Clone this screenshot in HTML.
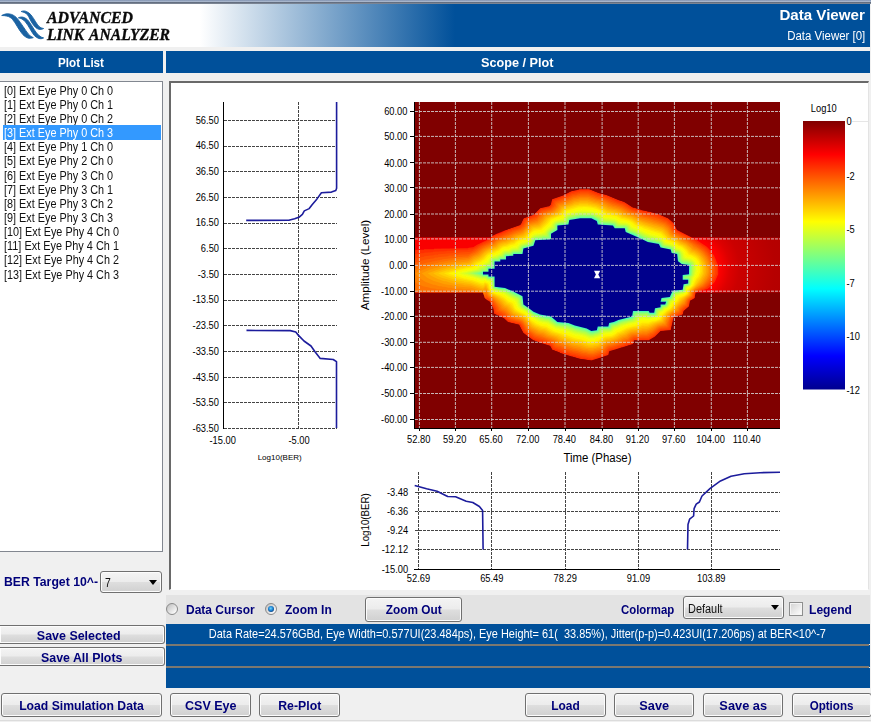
<!DOCTYPE html>
<html><head><meta charset="utf-8"><title>Data Viewer</title>
<style>
html,body{margin:0;padding:0}
body{width:871px;height:722px;position:relative;overflow:hidden;background:#f0f0f0;font-family:"Liberation Sans",sans-serif;font-size:12px;color:#000}
.abs{position:absolute}
.t{position:absolute;white-space:pre;line-height:1;display:block}
#chrome{left:0;top:0;width:871px;height:4px;background:linear-gradient(#8898b4 0,#8fa0bc 18%,#b8c8e0 32%,#8c98aa 46%,#626e80 58%,#687282 80%,#9aa2ae 100%)}
#hdr{left:0;top:3.6px;width:870px;height:43.4px;background:linear-gradient(90deg,#fff 0,#fff 200px,#00509a 455px,#00509a 100%)}
.bar{top:51px;height:22px;background:#00509a}
#listbox{left:0;top:81px;width:163px;height:471px;background:#fff;border:1px solid #828790;border-left:none;box-sizing:border-box}
.sel{position:absolute;left:3px;width:158px;height:14.15px;background:#3399ff}
#plotpanel{left:169px;top:81px;width:700px;height:509px;background:#fff;box-sizing:border-box;border-left:2px solid #696969;border-top:2px solid #696969;border-right:1px solid #e3e3e3;border-bottom:1px solid #fff}
#ctl{left:166px;top:595px;width:704px;height:29px;background:#e3e3e3}
.btn{position:absolute;border:1px solid #707070;border-radius:3px;background:linear-gradient(#f4f4f4 0,#ececec 48%,#dedede 52%,#d0d0d0 100%);box-shadow:inset 0 0 0 1px #fcfcfc}
.combo{position:absolute;border:1px solid #707070;border-radius:3px;background:linear-gradient(#f4f4f4 0,#ececec 48%,#dedede 52%,#d0d0d0 100%);box-shadow:inset 0 0 0 1px #fcfcfc;box-sizing:border-box}
.combo i{position:absolute;right:3.6px;top:50%;margin-top:-2.2px;width:0;height:0;border-left:4.3px solid transparent;border-right:4.3px solid transparent;border-top:5.6px solid #000}
.status{position:absolute;left:166px;width:703.8px;background:#00509a}
.radio{position:absolute;width:10.4px;height:10.4px;border-radius:50%;border:1px solid #8a8a8a;background:linear-gradient(135deg,#c4c4c4 10%,#fafafa 85%)}
.radio.on::after{content:"";position:absolute;left:2.2px;top:2.2px;width:6px;height:6px;border-radius:50%;background:radial-gradient(circle at 45% 40%,#6fd6ff 0,#1a7fd0 45%,#0a2f66 85%)}
.check{position:absolute;width:11.6px;height:11.8px;border:1px solid #8e8f8f;background:linear-gradient(135deg,#d2d2d2,#fff);box-shadow:inset 0 0 0 1px #f4f4f4}
</style></head>
<body>
<div id="chrome" class="abs"></div>
<div id="hdr" class="abs"></div>
<svg class="abs" style="left:0;top:0" width="48" height="48" viewBox="0 0 48 48">
 <path d="M1.7 15.5 C4 14 8 13.2 11.5 14.4 C14 15.4 15.6 16.6 17.2 18.4 C19.5 21 21 23.6 23 26.4 C25 29.2 26.6 32 28.7 34.4 C30.2 36 31.6 36.9 33.3 37.6 C31.4 38.4 29.4 38.5 27.6 37.9 C25.2 37 23.4 35.4 21.8 33.3 C20 31 18.7 28.8 17.2 26.4 C15.8 24 14.4 21.7 12.6 19.5 C11 17.7 9.2 16.6 6.9 16.1 C5.2 15.7 3.4 15.5 1.7 15.5Z" fill="#1a62a2" stroke="#1a62a2" stroke-width="0.9" stroke-linejoin="round"/>
 <path d="M18.4 17.8 C20 17 21.5 16.9 23 17.2 C25.4 17.8 27.2 19.2 28.7 21.2 C30.8 24 32.5 27 34.4 29.9 C35.8 32 37.2 34 39 35.6 C40.4 36.8 41.9 37.5 43.6 37.9 C42 38.8 40.5 38.9 39 38.5 C37.1 38 35.7 37 34.4 35.6 C32.6 33.5 31.3 31 29.9 28.7 C28.5 26.3 27.1 23.9 25.3 21.8 C24.3 20.6 23.2 19.6 21.8 18.9 C20.8 18.4 19.6 18 18.4 17.8Z" fill="#1a62a2" stroke="#1a62a2" stroke-width="0.9" stroke-linejoin="round"/>
 <path d="M21.2 11.5 C23 10.8 24.8 10.8 26.4 11.5 C28.3 12.3 29.7 13.4 31 14.9 C32.8 17 34.2 19.5 35.6 21.8 C36.6 23.4 37.7 25 39 26.4 C40.3 27.6 41.8 28.2 43.6 28.5 C42.1 29.4 40.5 29.6 39 29.3 C37.1 28.8 35.7 27.7 34.4 26.2 C32.9 24.5 31.9 22.7 30.8 20.9 C29.8 19.2 28.8 16.4 27.6 14.9 C26.7 13.8 25.5 13 24.1 12.4 C23.2 12 22.2 11.7 21.2 11.5Z" fill="#1a62a2" stroke="#1a62a2" stroke-width="0.9" stroke-linejoin="round"/>
</svg>
<span class="t" style="left:47.30px;top:9.50px;font-family:'Liberation Serif',serif;font-size:16px;font-weight:bold;font-style:italic;color:#0a0a0a;transform:scaleX(0.9903);transform-origin:0 0;-webkit-text-stroke:0.35px #0a0a0a">ADVANCED</span>
<span class="t" style="left:47.30px;top:26.80px;font-family:'Liberation Serif',serif;font-size:16px;font-weight:bold;font-style:italic;color:#0a0a0a;transform:scaleX(0.9753);transform-origin:0 0;-webkit-text-stroke:0.35px #0a0a0a;word-spacing:1.5px">LINK ANALYZER</span>
<span class="t" style="left:780.02px;top:6.90px;font-family:'Liberation Sans',sans-serif;font-size:15px;font-weight:bold;font-style:normal;color:#fff;transform:scaleX(1.0073);transform-origin:100% 0;">Data Viewer</span>
<span class="t" style="left:780.37px;top:30.02px;font-family:'Liberation Sans',sans-serif;font-size:12.5px;font-weight:normal;font-style:normal;color:#fff;transform:scaleX(0.9151);transform-origin:100% 0;">Data Viewer [0]</span>
<div class="abs bar" style="left:0;width:163px"></div>
<div class="abs bar" style="left:166px;width:704px"></div>
<span class="t" style="left:57.50px;top:56.36px;font-family:'Liberation Sans',sans-serif;font-size:13.4px;font-weight:bold;font-style:normal;color:#fff;transform:scaleX(0.8707);transform-origin:0 0;">Plot List</span>
<span class="t" style="left:481.00px;top:56.36px;font-family:'Liberation Sans',sans-serif;font-size:13.4px;font-weight:bold;font-style:normal;color:#fff;transform:scaleX(0.9460);transform-origin:0 0;">Scope / Plot</span>
<div id="listbox" class="abs"></div>
<span class="t" style="left:4.30px;top:83.66px;font-family:'Liberation Sans',sans-serif;font-size:13.4px;font-weight:normal;font-style:normal;color:#111;transform:scaleX(0.8098);transform-origin:0 0;">[0] Ext Eye Phy 0 Ch 0</span>
<span class="t" style="left:4.30px;top:97.81px;font-family:'Liberation Sans',sans-serif;font-size:13.4px;font-weight:normal;font-style:normal;color:#111;transform:scaleX(0.8098);transform-origin:0 0;">[1] Ext Eye Phy 0 Ch 1</span>
<span class="t" style="left:4.30px;top:111.96px;font-family:'Liberation Sans',sans-serif;font-size:13.4px;font-weight:normal;font-style:normal;color:#111;transform:scaleX(0.8098);transform-origin:0 0;">[2] Ext Eye Phy 0 Ch 2</span>
<div class="sel" style="top:125.45px"></div>
<span class="t" style="left:4.30px;top:126.11px;font-family:'Liberation Sans',sans-serif;font-size:13.4px;font-weight:normal;font-style:normal;color:#fff;transform:scaleX(0.8098);transform-origin:0 0;">[3] Ext Eye Phy 0 Ch 3</span>
<span class="t" style="left:4.30px;top:140.26px;font-family:'Liberation Sans',sans-serif;font-size:13.4px;font-weight:normal;font-style:normal;color:#111;transform:scaleX(0.8098);transform-origin:0 0;">[4] Ext Eye Phy 1 Ch 0</span>
<span class="t" style="left:4.30px;top:154.41px;font-family:'Liberation Sans',sans-serif;font-size:13.4px;font-weight:normal;font-style:normal;color:#111;transform:scaleX(0.8098);transform-origin:0 0;">[5] Ext Eye Phy 2 Ch 0</span>
<span class="t" style="left:4.30px;top:168.56px;font-family:'Liberation Sans',sans-serif;font-size:13.4px;font-weight:normal;font-style:normal;color:#111;transform:scaleX(0.8098);transform-origin:0 0;">[6] Ext Eye Phy 3 Ch 0</span>
<span class="t" style="left:4.30px;top:182.71px;font-family:'Liberation Sans',sans-serif;font-size:13.4px;font-weight:normal;font-style:normal;color:#111;transform:scaleX(0.8098);transform-origin:0 0;">[7] Ext Eye Phy 3 Ch 1</span>
<span class="t" style="left:4.30px;top:196.86px;font-family:'Liberation Sans',sans-serif;font-size:13.4px;font-weight:normal;font-style:normal;color:#111;transform:scaleX(0.8098);transform-origin:0 0;">[8] Ext Eye Phy 3 Ch 2</span>
<span class="t" style="left:4.30px;top:211.01px;font-family:'Liberation Sans',sans-serif;font-size:13.4px;font-weight:normal;font-style:normal;color:#111;transform:scaleX(0.8098);transform-origin:0 0;">[9] Ext Eye Phy 3 Ch 3</span>
<span class="t" style="left:4.30px;top:225.16px;font-family:'Liberation Sans',sans-serif;font-size:13.4px;font-weight:normal;font-style:normal;color:#111;transform:scaleX(0.8088);transform-origin:0 0;">[10] Ext Eye Phy 4 Ch 0</span>
<span class="t" style="left:4.30px;top:239.31px;font-family:'Liberation Sans',sans-serif;font-size:13.4px;font-weight:normal;font-style:normal;color:#111;transform:scaleX(0.8145);transform-origin:0 0;">[11] Ext Eye Phy 4 Ch 1</span>
<span class="t" style="left:4.30px;top:253.46px;font-family:'Liberation Sans',sans-serif;font-size:13.4px;font-weight:normal;font-style:normal;color:#111;transform:scaleX(0.8088);transform-origin:0 0;">[12] Ext Eye Phy 4 Ch 2</span>
<span class="t" style="left:4.30px;top:267.61px;font-family:'Liberation Sans',sans-serif;font-size:13.4px;font-weight:normal;font-style:normal;color:#111;transform:scaleX(0.8088);transform-origin:0 0;">[13] Ext Eye Phy 4 Ch 3</span>
<div id="plotpanel" class="abs"></div>
<div id="ctl" class="abs"></div>
<svg id="plot" width="871" height="722" viewBox="0 0 871 722" style="position:absolute;left:0;top:0">
<defs>
<clipPath id="co"><polygon points="415.0,237.6 491.2,237.6 491.2,236.5 496.7,233.8 507.8,229.2 520.6,224.6 523.4,218.2 533.5,214.5 540.0,208.0 550.0,205.3 551.8,198.9 562.9,195.2 570.2,191.5 579.4,188.8 588.6,188.8 597.8,192.5 607.0,195.2 616.5,198.9 625.7,202.6 632.1,207.1 642.2,209.9 657.0,213.6 668.0,218.2 673.5,222.8 677.1,230.1 686.3,234.7 691.8,237.6 780.0,237.6 780.0,292.6 695.5,292.6 694.6,298.0 690.0,300.8 689.0,306.3 683.6,311.0 682.7,314.6 673.5,317.4 670.7,330.2 660.6,331.1 655.0,336.6 648.7,340.3 634.0,340.3 633.0,344.0 618.4,348.6 609.2,351.3 608.3,355.0 600.0,357.8 591.3,360.5 579.4,358.7 570.2,356.0 561.0,353.2 551.8,349.5 550.0,345.8 540.8,343.0 533.5,340.3 528.0,336.6 523.4,333.0 518.8,324.7 507.8,322.0 504.0,318.3 494.0,313.7 493.0,308.2 489.4,301.7 484.8,298.0 483.0,292.6 415.0,292.6"/></clipPath>
<clipPath id="cp"><rect x="415" y="102" width="365" height="326"/></clipPath>
<filter id="b0" x="-30%" y="-30%" width="160%" height="160%"><feGaussianBlur stdDeviation="0.7"/></filter>
<radialGradient id="rglow" gradientUnits="userSpaceOnUse" cx="690" cy="268" r="120"><stop offset="0" stop-color="#ff0000"/><stop offset="0.24" stop-color="#ff0000"/><stop offset="0.329" stop-color="#dd0000"/><stop offset="0.4125" stop-color="#cb0000"/><stop offset="0.704" stop-color="#b60000"/><stop offset="0.975" stop-color="#b00000"/></radialGradient>
<linearGradient id="jet" x1="0" y1="0" x2="0" y2="1"><stop offset="0" stop-color="#800000"/><stop offset="0.125" stop-color="#ff0000"/><stop offset="0.375" stop-color="#ffff00"/><stop offset="0.625" stop-color="#00ffff"/><stop offset="0.875" stop-color="#0000ff"/><stop offset="1" stop-color="#00008f"/></linearGradient>
</defs>
<rect x="415" y="102" width="365" height="326" fill="#800000"/>
<g clip-path="url(#co)">
<rect x="415" y="230" width="200" height="70" fill="#fa0000"/>
<rect x="615" y="230" width="165" height="70" fill="url(#rglow)"/>
<g filter="url(#b0)">
<path d="M718.2 265.8L714.2 255.8L710.2 250.2L706.8 246.8L696.2 239.8L677.2 230.2L673.8 223.2L668.2 218.2L657.8 213.8L656.2 213.8L649.8 211.8L647.8 211.8L647.2 211.2L641.8 210.2L639.8 209.2L638.2 209.2L634.8 207.8L633.2 207.8L623.8 201.8L618.8 200.2L606.2 194.8L599.2 193.2L589.2 189.2L579.2 189.2L578.8 189.8L571.2 191.2L563.8 195.2L552.2 199.2L550.8 204.8L549.2 206.2L540.2 208.2L533.8 214.8L523.8 218.2L521.2 223.8L519.8 225.2L507.8 229.2L500.8 232.8L496.2 234.2L491.2 236.8L490.8 238.2L477.2 244.8L473.2 247.2L468.8 247.8L468.2 248.2L434.2 248.8L433.8 249.2L424.2 249.2L423.8 249.8L416.8 249.8L415.2 250.2L415.2 293.8L481.8 293.8L482.8 294.8L484.2 299.2L487.2 301.8L488.8 300.8L490.2 302.2L493.2 308.2L494.2 313.8L503.8 318.2L508.2 322.2L519.2 324.8L523.2 332.8L532.8 340.2L549.2 345.8L550.8 346.8L552.2 349.8L559.2 352.2L560.8 353.2L571.2 356.8L572.8 356.8L579.2 358.8L592.2 360.8L608.8 355.2L609.2 352.2L610.2 351.2L614.8 350.2L621.2 347.8L622.8 347.8L629.2 345.2L633.2 344.2L633.8 341.8L634.8 340.8L648.8 340.8L654.8 337.2L660.8 331.2L670.8 330.2L673.8 318.2L674.8 317.2L682.8 314.8L683.8 311.2L689.2 306.8L690.2 301.2L694.8 298.2L695.8 293.2L696.8 292.2L707.8 288.8L711.8 285.2L714.8 281.8L718.2 274.2Z" fill="#ff2f00"/>
<path d="M716.8 266.8L713.2 257.2L708.8 250.8L705.8 247.8L691.2 238.2L676.8 231.2L674.2 227.8L672.8 224.2L667.8 219.8L657.2 215.2L645.2 212.8L638.8 210.2L637.2 210.2L634.2 208.8L632.8 208.8L628.8 206.8L625.8 204.2L618.2 201.8L605.8 196.2L598.8 194.8L588.8 190.8L579.8 190.8L579.2 191.2L571.8 192.8L566.2 195.8L553.8 200.2L552.8 201.8L551.8 205.2L549.8 207.2L541.2 209.2L534.8 215.8L528.8 218.2L524.8 219.2L522.2 224.2L520.2 226.2L512.8 228.8L498.2 235.2L497.2 235.2L492.2 237.8L491.8 239.2L482.8 243.2L472.8 249.2L467.8 249.8L467.2 250.2L456.2 250.2L455.8 250.8L447.2 250.8L446.8 251.2L433.2 251.8L432.8 252.2L423.8 252.8L423.2 253.2L419.8 253.2L419.2 253.8L416.2 253.8L415.2 254.2L415.2 293.8L481.8 293.8L482.8 294.8L483.8 298.2L485.2 300.2L486.8 300.8L488.2 299.8L490.8 301.8L494.2 307.8L494.8 310.8L495.8 312.8L504.8 317.2L510.2 321.8L519.8 323.8L520.8 324.8L524.2 332.2L526.2 333.2L533.2 338.8L543.8 342.2L545.2 343.2L549.2 344.2L551.2 345.2L553.8 348.8L557.2 349.8L558.8 350.8L560.2 350.8L561.8 351.8L572.2 355.2L573.8 355.2L582.2 357.8L584.8 357.8L585.2 358.2L587.8 358.2L588.2 358.8L590.8 358.8L591.8 359.2L607.2 354.2L608.2 351.2L610.2 349.8L613.8 349.2L619.8 347.2L621.2 346.2L622.8 346.2L625.8 344.8L631.8 343.2L632.8 340.8L633.8 339.8L648.2 339.2L655.2 335.2L660.2 330.2L669.8 329.2L672.8 318.2L676.2 315.8L681.2 314.2L682.2 313.2L682.8 310.8L687.2 306.8L688.2 306.8L688.2 305.8L689.2 304.2L689.8 300.8L694.2 297.8L695.2 292.8L696.2 291.8L705.2 288.8L712.8 281.8L715.8 276.2L716.8 273.2Z" fill="#ff4000"/>
<path d="M715.2 267.2L713.8 262.2L711.2 256.8L707.2 251.2L704.2 248.2L700.2 245.2L696.2 243.2L694.8 241.8L692.2 240.8L690.8 239.2L676.2 232.2L673.8 229.2L671.8 225.2L666.8 220.8L664.8 220.2L662.2 218.8L660.8 218.8L656.8 216.8L651.2 215.8L649.2 214.8L647.2 214.8L642.2 212.8L640.8 212.8L631.8 209.8L622.8 204.2L617.2 202.8L607.2 198.2L601.2 196.2L597.8 195.8L588.2 192.2L580.2 192.2L579.8 192.8L577.8 192.8L577.2 193.2L571.8 194.2L567.2 196.8L554.8 201.2L552.2 206.8L550.2 208.2L548.8 208.2L541.2 210.8L535.8 216.8L529.8 219.2L525.8 220.2L523.8 224.2L520.8 227.2L517.8 228.8L512.2 230.2L511.2 231.2L508.8 231.8L501.8 235.2L496.8 236.8L494.8 237.8L492.2 240.2L479.8 246.2L477.2 248.2L470.8 251.8L438.2 254.2L437.8 254.8L434.2 254.8L433.8 255.2L424.2 256.2L423.8 256.8L415.2 258.2L415.2 293.8L481.8 293.8L482.8 294.8L482.8 295.8L484.8 299.8L487.2 297.8L492.2 302.2L496.2 309.2L496.2 311.2L504.8 315.8L507.2 318.2L510.2 320.2L519.8 322.8L522.8 326.2L525.2 331.2L534.2 337.8L543.2 340.8L544.8 341.8L550.2 343.2L552.2 344.2L553.8 346.8L555.2 347.8L572.8 353.8L574.2 353.8L582.8 356.2L585.2 356.2L588.8 357.2L593.2 357.2L605.8 353.2L606.8 351.2L609.2 348.8L614.2 347.8L618.8 345.8L621.8 345.2L624.8 343.8L630.8 342.2L631.2 340.8L634.2 338.2L648.2 337.8L653.8 334.8L660.2 329.2L668.2 328.2L669.8 325.8L669.8 324.2L671.8 318.2L674.2 315.8L680.8 313.2L682.2 309.8L685.8 306.8L687.2 306.2L689.2 300.2L691.8 298.8L693.8 296.8L694.2 293.2L696.2 291.2L704.8 287.8L707.2 285.8L711.8 280.8L714.8 274.2L714.8 272.8L715.2 272.2Z" fill="#ff5000"/>
<path d="M713.8 267.8L710.8 258.8L706.8 252.8L703.2 249.2L697.8 245.2L690.8 241.2L689.2 239.8L680.8 235.8L676.8 233.2L675.8 233.2L673.2 230.8L670.2 225.2L667.8 223.8L665.8 221.8L663.2 221.2L660.8 219.8L654.8 217.8L644.2 215.2L638.2 212.8L636.8 212.8L635.2 211.8L632.2 211.2L622.8 205.8L610.8 201.8L604.8 198.8L596.2 196.8L593.2 195.2L591.8 195.2L588.2 193.8L580.2 193.8L575.2 195.2L573.2 195.2L564.8 199.2L562.2 199.8L556.2 202.2L555.2 203.2L555.2 204.2L553.8 206.8L550.8 209.2L542.2 211.8L536.8 217.8L526.8 221.2L523.8 226.2L520.8 228.8L513.2 231.2L507.2 234.2L497.8 237.8L494.8 239.2L492.2 241.8L482.2 246.2L474.8 251.2L468.8 254.2L458.2 254.8L457.8 255.2L453.2 255.2L452.8 255.8L448.8 255.8L448.2 256.2L437.8 257.2L437.2 257.8L434.8 257.8L434.2 258.2L424.8 259.8L415.8 262.2L415.2 262.8L415.2 293.8L481.8 293.8L482.8 294.8L483.8 298.2L486.8 296.2L487.2 297.2L492.8 301.2L497.8 309.2L497.8 310.8L499.8 311.2L504.8 314.2L509.8 318.8L520.8 322.2L522.8 324.2L526.2 330.8L531.2 333.8L534.2 336.2L547.2 340.8L548.8 341.8L552.2 342.8L555.2 346.2L560.8 347.8L562.2 348.8L563.8 348.8L569.8 351.2L571.2 351.2L573.2 352.2L578.8 353.2L580.8 354.2L585.2 354.8L585.8 355.2L593.2 355.8L604.8 352.2L605.8 350.2L608.8 347.8L619.2 344.8L620.8 343.8L623.2 343.2L627.8 341.2L629.2 341.2L630.2 339.8L633.2 337.2L648.2 336.2L651.2 334.2L653.2 333.8L658.2 329.2L660.2 328.2L667.2 327.2L668.2 326.2L669.8 320.8L671.8 316.8L673.2 315.2L679.8 312.8L680.8 310.2L684.2 306.8L686.8 305.2L687.2 302.8L688.8 299.8L692.8 296.8L693.2 293.8L695.8 290.8L704.2 286.8L708.8 282.2L711.2 278.8L713.2 274.2Z" fill="#ff5f00"/>
<path d="M712.2 267.8L710.2 261.2L708.2 257.2L704.2 251.8L693.2 243.8L690.2 242.2L688.8 240.8L674.8 233.8L671.8 230.8L669.2 226.2L665.2 223.2L656.2 219.8L654.8 219.8L647.8 217.2L644.2 216.8L634.8 213.2L633.2 212.2L631.8 212.2L621.8 206.8L610.8 203.2L604.8 200.2L598.2 198.8L588.2 195.2L580.2 195.2L579.8 195.8L577.2 195.8L576.8 196.2L573.2 196.8L568.2 199.2L557.2 203.2L556.2 204.2L555.8 206.2L552.2 209.8L542.2 213.2L536.8 219.2L527.8 222.2L525.8 224.8L525.2 226.2L521.2 229.8L515.2 231.8L508.2 235.2L505.8 235.8L498.2 239.2L497.2 239.2L493.8 242.2L484.8 246.2L475.8 252.2L470.2 254.8L468.2 256.2L455.8 257.2L455.2 257.8L442.2 259.2L441.8 259.8L439.8 259.8L439.2 260.2L437.2 260.2L436.8 260.8L434.8 260.8L434.2 261.2L432.2 261.2L431.8 261.8L426.2 262.8L415.8 266.2L415.2 266.8L415.2 290.8L416.2 291.2L418.8 291.2L419.2 291.8L431.8 292.2L432.2 292.8L481.8 293.8L482.8 294.8L483.2 296.8L486.2 294.2L487.8 296.8L490.8 298.2L494.2 301.8L498.2 307.2L499.2 309.8L504.2 312.2L511.2 318.2L514.2 318.8L515.8 319.8L517.2 319.8L521.2 321.2L523.2 323.2L526.8 329.2L535.2 335.2L543.2 337.8L549.8 340.8L552.2 341.2L556.8 345.2L561.2 346.2L562.8 347.2L571.8 350.2L577.2 351.2L583.2 353.2L585.8 353.2L588.8 354.2L593.2 354.2L603.2 351.2L606.2 347.8L608.8 346.2L613.8 345.2L619.8 342.8L622.2 342.2L624.8 340.8L628.8 339.8L630.2 337.8L634.2 335.8L640.2 335.8L640.8 335.2L646.8 335.2L648.2 334.2L649.2 334.2L650.2 333.2L652.2 332.8L658.8 327.8L662.2 326.8L664.2 326.8L664.8 326.2L666.8 326.2L670.2 317.2L673.2 314.2L674.2 314.2L679.2 311.8L680.2 309.2L683.8 305.8L685.8 304.8L687.8 299.8L692.2 296.2L692.8 293.2L695.2 290.2L703.2 286.2L708.2 280.8L710.8 276.8L712.2 272.2Z" fill="#ff6f00"/>
<path d="M710.8 267.8L710.2 267.2L709.2 262.2L706.8 257.2L701.8 251.2L697.8 248.2L693.8 246.2L691.8 244.2L687.2 241.2L672.8 233.8L668.8 227.8L664.2 224.2L647.8 218.8L641.2 217.2L637.8 215.2L628.8 212.2L621.8 208.2L614.8 205.8L613.2 205.8L604.8 201.8L598.8 199.8L597.2 199.8L588.2 196.8L579.8 196.8L579.2 197.2L573.2 198.2L571.8 199.2L558.2 204.2L556.8 207.2L554.8 209.2L551.8 211.2L543.8 213.8L537.2 220.8L528.8 223.2L526.2 226.8L522.8 230.2L496.2 241.2L493.8 243.8L491.8 244.2L482.8 248.8L476.8 253.2L468.2 257.8L455.2 259.2L454.8 259.8L451.8 259.8L451.2 260.2L448.8 260.2L448.2 260.8L438.8 262.2L438.2 262.8L430.8 264.2L428.8 265.2L427.2 265.2L415.8 269.8L415.2 270.2L415.2 281.8L416.8 283.2L422.8 286.2L429.8 287.8L430.2 288.2L435.8 288.8L436.2 289.2L445.2 289.8L445.8 290.2L451.2 290.2L451.8 290.8L470.2 291.2L477.2 293.8L481.8 293.8L482.8 295.2L486.2 292.2L488.2 295.8L492.8 298.8L494.8 300.8L501.2 309.2L505.2 311.2L511.2 316.8L517.8 319.2L519.2 319.2L522.8 321.2L528.2 329.2L536.2 334.2L541.8 335.8L543.2 336.8L551.8 339.8L554.8 341.2L558.2 344.2L559.8 344.2L573.8 349.2L575.2 349.2L583.8 351.8L585.8 351.8L588.8 352.8L593.2 352.8L599.2 350.8L600.8 350.8L602.8 349.8L607.8 345.2L612.8 344.2L621.2 341.2L623.8 339.8L627.8 338.8L631.8 335.2L633.2 334.8L637.2 334.8L637.8 334.2L641.8 334.2L642.2 333.8L646.8 333.8L652.2 331.2L656.8 327.8L659.8 326.2L665.8 325.2L668.8 318.8L668.8 317.8L670.2 315.8L672.8 313.8L678.8 310.8L679.2 308.8L682.2 305.8L685.2 303.8L685.2 302.8L687.2 299.2L691.8 295.8L691.8 293.8L693.2 291.2L694.8 289.8L697.2 288.8L702.8 285.2L706.2 281.2L709.8 275.2L710.8 271.8Z" fill="#ff8000"/>
<path d="M709.2 267.8L708.8 267.2L707.8 262.2L705.8 258.2L703.8 255.2L700.2 251.8L696.8 249.2L694.2 248.2L691.8 245.8L686.8 242.2L672.2 234.8L670.2 232.8L667.8 228.8L663.2 225.2L640.2 218.2L633.2 214.8L625.8 212.2L620.8 209.2L609.2 205.8L604.8 203.2L597.2 200.8L595.8 200.8L593.8 199.8L592.2 199.8L587.8 198.2L579.8 198.2L579.2 198.8L573.2 199.8L566.8 202.8L559.2 205.2L558.2 207.2L554.8 210.8L552.2 212.2L548.2 213.2L544.2 215.2L541.8 218.2L537.2 222.2L529.2 224.2L527.8 226.8L521.8 232.2L514.2 234.8L511.2 236.8L497.8 241.8L494.2 244.8L484.2 249.2L477.8 254.2L473.2 256.2L468.8 259.2L457.8 260.8L457.2 261.2L454.8 261.2L454.2 261.8L451.8 261.8L451.2 262.2L444.2 263.2L443.8 263.8L434.2 265.8L425.2 268.8L415.2 273.2L419.2 277.8L425.2 281.8L433.2 284.8L434.8 284.8L439.2 286.2L441.8 286.2L442.2 286.8L444.8 286.8L448.2 287.8L451.8 287.8L452.2 288.2L462.2 288.8L462.8 289.2L469.2 289.2L482.2 293.2L483.2 293.2L486.2 290.8L487.2 291.8L488.8 295.2L492.8 297.8L500.8 305.8L501.8 307.8L506.2 310.2L511.8 315.8L522.2 319.8L525.2 322.8L529.8 328.8L537.2 333.2L543.2 334.8L546.8 336.8L552.8 338.8L555.8 340.2L558.8 342.8L560.2 342.8L574.2 347.8L579.8 348.8L583.8 350.2L588.2 350.8L588.8 351.2L593.2 351.2L593.8 350.8L600.8 349.2L605.2 345.2L608.2 343.8L613.8 342.8L619.2 340.2L620.2 340.2L623.8 338.2L627.2 337.2L629.2 335.2L632.2 333.8L638.8 333.2L639.2 332.8L642.2 332.8L642.8 332.2L646.2 332.2L652.2 329.8L658.2 325.8L661.2 325.2L663.2 324.2L665.2 324.2L666.2 320.8L668.8 316.2L671.2 313.8L677.8 310.2L678.8 307.8L681.8 304.8L684.2 303.2L686.8 298.8L691.2 295.2L691.8 292.2L695.2 288.8L702.8 283.8L706.8 278.2L708.2 275.2L709.2 271.8Z" fill="#ff9000"/>
<path d="M707.8 267.8L707.2 267.2L706.2 262.2L704.2 258.2L700.2 253.2L696.8 250.8L693.2 249.2L686.2 243.2L681.8 241.2L679.2 239.2L674.2 236.8L673.2 236.8L670.2 234.8L667.2 230.2L663.8 227.2L655.8 224.2L654.2 224.2L650.8 222.8L649.2 222.8L640.2 219.8L633.8 216.2L631.2 215.8L629.8 214.8L623.8 212.8L619.8 210.2L615.2 208.8L613.8 208.8L610.2 207.2L608.8 207.2L604.8 204.8L602.2 204.2L597.8 202.2L596.2 202.2L587.8 199.8L579.8 199.8L579.2 200.2L574.8 200.8L569.2 203.2L560.2 206.2L558.8 208.8L553.8 212.8L544.8 216.2L542.2 219.8L538.2 223.2L530.2 225.2L523.2 232.8L518.8 234.8L516.2 235.2L511.2 238.2L508.8 238.8L506.2 240.2L500.8 241.8L497.8 243.2L495.8 245.2L485.8 249.8L478.8 255.2L474.2 257.2L468.2 261.2L456.8 262.8L456.2 263.2L454.2 263.2L453.8 263.8L451.8 263.8L451.2 264.2L442.8 265.8L440.8 266.8L439.2 266.8L437.2 267.8L435.8 267.8L429.8 269.8L421.8 273.2L427.2 277.8L433.2 280.8L444.8 284.2L452.2 285.2L452.8 285.8L455.2 285.8L455.8 286.2L471.2 287.8L483.2 291.8L486.2 289.2L489.8 295.2L494.2 297.8L498.2 301.2L503.8 307.2L506.2 308.2L510.8 313.2L514.8 315.8L515.8 315.8L522.8 318.8L526.2 322.2L527.8 324.8L531.2 328.2L537.2 331.2L538.2 332.2L543.2 333.2L547.8 335.8L553.8 337.8L557.8 339.8L559.2 341.2L562.2 341.8L571.2 345.2L580.2 347.2L582.2 348.2L588.2 349.2L588.8 349.8L593.2 349.8L593.8 349.2L600.8 347.8L603.8 344.8L607.2 342.8L615.8 340.8L622.8 337.2L626.2 336.2L627.8 334.8L631.2 332.8L639.8 331.8L642.8 330.8L646.2 330.8L649.2 329.8L658.2 324.8L661.2 324.2L662.8 323.2L664.2 323.2L667.2 316.8L671.2 312.8L675.8 310.2L678.2 306.8L683.8 301.8L685.8 298.8L690.2 295.2L691.2 291.8L694.8 288.2L698.8 285.8L702.8 281.8L706.8 275.2L707.8 271.8Z" fill="#ffa000"/>
<path d="M706.2 267.8L705.8 267.2L705.8 265.2L704.8 262.2L702.8 258.2L698.8 253.8L694.2 250.8L692.2 250.2L690.8 248.2L685.8 244.2L670.2 236.2L667.2 232.2L664.2 229.2L661.8 227.8L641.8 221.8L631.8 216.8L623.8 214.2L619.8 211.8L618.8 211.8L615.8 210.2L608.8 208.8L603.2 205.8L596.2 203.2L594.8 203.2L590.2 201.8L588.2 201.8L587.8 201.2L579.8 201.2L579.2 201.8L574.8 202.2L571.8 203.8L561.2 207.2L559.8 209.8L557.8 211.8L555.2 212.8L554.2 213.8L550.8 214.8L545.8 217.2L543.2 220.8L539.2 224.2L536.8 225.2L534.8 225.2L531.2 226.2L523.2 234.2L518.2 235.8L510.8 239.8L509.8 239.8L505.8 241.8L502.8 242.2L499.2 243.8L495.8 246.8L490.2 248.8L484.8 251.8L479.8 256.2L472.8 259.8L468.8 262.8L460.8 263.8L460.2 264.2L455.8 264.8L453.2 265.8L451.2 265.8L450.8 266.2L443.2 267.8L427.8 273.2L431.2 275.8L437.2 278.8L444.2 281.2L445.8 281.2L452.2 283.2L463.2 284.8L463.8 285.2L470.8 285.8L482.8 289.8L485.8 287.2L490.2 294.8L491.8 295.8L492.8 295.8L497.8 299.2L501.2 302.2L504.8 306.2L506.8 306.8L513.2 313.8L521.2 317.2L522.2 317.2L524.2 318.8L531.2 326.8L539.8 331.2L543.2 331.8L548.8 334.8L556.2 337.2L560.8 340.2L564.2 340.8L565.8 341.8L573.2 344.2L580.8 345.8L586.2 347.8L593.2 348.2L593.8 347.8L595.8 347.8L597.8 346.8L599.2 346.8L606.2 341.8L611.8 340.8L617.2 338.8L622.8 335.8L625.8 334.8L630.8 331.8L634.2 331.2L634.8 330.8L640.2 330.2L642.8 329.2L646.2 329.2L649.2 328.2L656.8 324.2L663.2 322.2L666.8 315.8L669.2 313.2L674.8 309.8L678.8 304.8L679.8 304.2L686.2 297.2L689.8 294.8L690.2 291.8L700.8 282.2L705.2 275.2L706.2 271.8Z" fill="#ffb100"/>
<path d="M704.8 267.8L704.2 267.2L703.8 263.2L699.8 256.2L694.2 252.2L691.2 251.2L690.2 249.8L685.2 245.2L680.8 243.2L676.8 240.2L669.8 237.2L663.2 230.2L660.2 228.8L653.8 227.2L643.2 223.8L641.8 222.8L637.8 221.8L631.2 217.8L622.8 215.2L618.8 212.8L607.2 209.8L603.2 207.2L594.8 204.2L588.2 203.2L587.8 202.8L579.2 202.8L578.8 203.2L574.8 203.8L571.8 205.2L567.2 206.2L562.2 208.2L559.2 212.2L546.8 218.2L540.2 225.2L538.2 226.2L532.2 227.2L523.8 235.2L517.8 237.2L514.8 239.2L506.8 242.8L502.2 243.8L499.2 245.2L497.2 247.2L488.8 250.8L484.8 253.2L481.2 256.8L478.2 258.8L473.8 260.8L470.2 263.8L458.8 265.8L458.2 266.2L456.2 266.2L455.8 266.8L446.2 268.8L433.2 273.2L436.2 275.2L441.8 277.8L457.2 282.2L470.8 284.2L482.8 288.2L485.8 285.8L486.8 286.8L489.8 292.8L491.8 294.8L497.8 297.8L502.2 301.2L505.2 304.8L507.8 305.8L510.8 308.8L513.2 312.2L519.2 315.2L520.2 315.2L525.2 318.2L532.8 326.2L539.8 329.8L544.8 330.8L550.8 334.2L557.2 336.2L561.8 338.8L573.8 342.8L581.2 344.2L586.2 346.2L587.8 346.2L588.2 346.8L593.2 346.8L593.8 346.2L597.8 345.8L606.2 340.2L610.8 339.8L615.2 338.2L620.2 335.2L623.8 334.2L629.8 330.8L633.2 329.8L636.2 329.8L642.8 327.8L648.2 327.2L655.2 323.8L662.8 321.2L663.8 318.2L666.8 314.2L675.8 307.8L675.8 306.8L680.2 301.8L685.8 296.8L688.8 294.8L689.8 291.2L693.8 287.8L700.2 280.8L704.2 273.8Z" fill="#ffc100"/>
<path d="M703.2 267.8L702.8 267.2L702.2 263.2L700.2 259.2L697.8 256.2L694.2 253.8L690.2 252.2L685.2 246.8L682.2 244.8L681.2 244.8L677.2 241.8L668.2 237.8L662.2 231.2L639.2 223.8L637.8 222.8L636.8 222.8L631.8 219.2L621.8 216.2L620.8 215.2L616.2 213.2L607.2 211.2L602.2 208.2L599.8 207.8L595.2 205.8L591.2 205.2L590.8 204.8L588.2 204.8L587.8 204.2L579.2 204.2L578.8 204.8L574.8 205.2L563.2 209.2L559.2 213.8L552.8 216.8L551.8 216.8L548.2 218.8L545.8 221.8L539.8 227.2L533.2 228.2L524.8 236.2L519.8 237.8L515.8 239.8L513.2 241.8L511.8 241.8L506.8 244.2L504.8 244.2L501.8 245.8L500.8 245.8L497.2 248.8L487.8 252.8L482.2 257.8L479.2 259.8L474.8 261.8L470.2 265.2L458.8 267.2L458.2 267.8L450.8 269.2L448.8 270.2L447.2 270.2L438.2 273.2L443.2 275.8L453.2 279.2L454.8 279.2L459.2 280.8L461.2 280.8L461.8 281.2L463.8 281.2L464.2 281.8L466.2 281.8L466.8 282.2L469.2 282.2L483.2 286.8L485.8 284.2L487.2 285.8L487.2 286.8L490.2 292.2L492.2 294.2L493.2 294.2L498.2 296.8L503.8 300.8L507.2 304.2L509.2 304.8L514.8 311.8L524.2 316.2L526.8 318.2L532.2 324.2L536.2 326.8L537.2 326.8L541.2 328.8L544.8 329.2L551.8 333.2L554.2 333.8L555.8 334.8L557.2 334.8L563.2 337.8L564.8 337.8L572.2 340.8L581.8 342.8L583.2 343.8L586.2 344.2L588.2 345.2L593.2 345.2L593.8 344.8L597.8 344.2L606.8 338.8L609.2 338.8L609.8 338.2L613.2 337.8L618.2 335.2L619.2 334.2L623.8 332.8L624.8 331.8L630.2 329.2L638.8 327.8L643.2 325.8L643.8 326.2L647.8 325.8L654.8 322.8L661.2 320.8L662.2 319.8L663.2 316.8L667.8 312.2L671.8 309.8L681.8 298.8L688.2 294.2L689.2 290.8L695.8 284.8L700.8 277.8L702.8 273.8Z" fill="#ffd200"/>
<path d="M701.8 267.2L701.2 266.8L701.2 264.8L700.2 261.8L698.8 259.2L695.8 256.2L689.2 253.2L686.8 249.8L681.8 245.8L678.8 244.8L676.8 242.8L672.8 240.8L668.2 239.2L665.8 236.2L661.2 232.2L656.8 230.8L655.2 230.8L653.2 229.8L651.8 229.8L647.2 227.8L644.8 227.2L643.2 226.2L640.8 225.8L639.2 224.8L636.8 224.2L632.8 221.2L629.8 219.8L625.2 218.2L621.8 217.8L619.8 216.2L615.2 214.2L612.8 214.2L610.8 213.2L606.8 212.8L602.2 209.8L599.8 209.2L595.8 207.2L591.8 206.8L591.2 206.2L588.8 206.2L588.2 205.8L578.8 205.8L564.2 210.2L560.2 214.8L553.2 217.8L552.2 217.8L549.8 219.2L546.8 222.8L540.8 228.2L533.2 229.8L524.8 237.8L519.2 239.2L515.8 241.2L514.2 242.8L508.8 244.2L505.8 245.8L502.8 246.2L497.8 249.8L488.2 253.8L486.2 255.2L483.2 258.8L480.2 260.8L475.8 262.8L471.8 266.2L465.2 267.2L462.8 268.2L460.8 268.2L443.8 273.2L449.2 275.8L456.8 278.2L471.2 281.2L483.2 285.2L484.8 283.2L485.8 283.2L487.8 284.8L489.2 289.2L492.2 293.2L494.2 293.8L497.8 295.8L498.8 295.8L501.2 297.8L502.8 298.2L507.8 302.8L510.2 303.8L512.2 305.8L514.8 310.2L517.8 312.2L523.8 314.8L531.2 321.8L535.2 324.8L542.8 327.8L546.2 328.2L548.8 330.2L552.8 332.2L559.8 334.2L563.8 336.2L565.2 336.2L572.8 339.2L581.8 341.2L588.8 343.8L593.8 343.8L599.2 341.8L605.2 337.8L610.8 337.2L613.8 336.2L618.2 333.2L620.2 332.8L626.8 329.2L633.2 327.2L635.8 327.2L640.2 325.8L642.8 324.2L644.2 324.8L644.8 324.2L648.2 324.2L652.8 322.2L654.2 322.2L660.8 319.8L662.2 317.2L662.2 316.2L664.8 314.2L666.8 311.8L670.2 309.8L678.2 301.2L679.8 298.8L685.2 295.8L687.8 293.8L688.8 290.2L694.2 285.2L697.2 279.8L699.8 276.8L701.8 271.8Z" fill="#ffe300"/>
<path d="M700.2 266.8L698.8 261.8L696.2 258.2L691.2 255.2L688.8 254.8L686.2 251.2L682.8 247.8L680.2 246.2L678.2 245.8L674.8 242.8L667.8 240.2L660.8 233.8L643.2 228.2L641.8 227.2L634.8 224.8L632.8 222.8L629.2 220.8L620.8 218.8L616.8 216.2L611.8 215.2L611.2 214.8L609.2 214.8L608.8 214.2L606.2 214.2L603.8 212.2L597.2 209.2L592.2 207.8L583.2 206.8L582.8 207.2L578.8 207.2L565.2 211.2L561.2 215.8L555.2 217.8L551.2 219.8L547.8 223.8L541.2 229.8L534.2 230.8L531.2 232.8L526.2 238.2L521.2 239.8L517.2 241.8L514.2 244.2L509.8 245.2L507.2 246.8L505.2 246.8L502.2 247.8L498.8 250.8L496.8 251.2L494.8 252.8L493.2 252.8L488.2 255.2L484.2 259.8L482.8 260.2L481.2 261.8L476.8 263.8L472.8 267.2L464.2 268.8L448.2 273.2L455.8 276.2L457.2 276.2L464.8 278.8L466.8 278.8L467.2 279.2L472.8 280.2L481.2 283.2L482.8 283.2L483.2 283.8L484.8 282.2L487.8 283.2L488.8 284.8L490.2 289.8L492.8 292.8L500.2 295.2L504.2 297.8L508.8 301.8L511.8 302.8L512.8 303.8L514.8 308.2L516.2 309.8L519.2 311.8L524.8 314.2L531.2 320.2L537.2 324.2L538.2 324.2L540.8 325.8L546.2 326.8L553.8 331.2L559.8 333.2L561.2 333.2L564.2 334.8L565.8 334.8L574.8 338.2L582.2 339.8L588.8 342.2L593.8 342.2L597.2 341.2L604.8 336.8L611.8 335.8L615.8 333.8L617.2 332.2L619.2 331.8L627.2 327.8L637.8 325.2L641.8 322.8L648.2 322.8L652.2 321.2L655.8 320.8L660.2 318.8L661.8 315.2L666.8 310.8L670.2 308.8L672.2 306.8L673.2 304.8L677.8 300.2L677.8 299.2L679.2 297.8L684.8 295.2L687.2 293.2L688.2 289.8L693.2 285.2L696.2 278.8L698.2 276.8L700.2 271.8Z" fill="#fff500"/>
<path d="M698.8 266.8L697.2 261.8L694.2 258.2L691.2 256.8L687.2 255.8L684.8 251.2L682.2 248.8L679.8 247.2L677.8 246.8L675.2 244.2L673.2 243.2L666.8 241.2L665.2 239.2L661.2 235.8L656.8 233.8L649.8 232.2L648.2 231.2L645.8 230.8L638.2 227.2L634.8 226.2L631.2 223.2L627.2 221.2L620.2 220.2L618.8 218.8L615.8 217.2L609.2 216.2L608.8 215.8L605.8 215.8L601.8 212.8L594.8 209.8L582.8 208.2L582.2 208.8L576.2 209.2L570.8 211.2L568.8 211.2L565.2 212.8L561.2 217.2L554.2 219.2L551.8 220.8L549.8 222.8L549.2 224.2L542.2 230.8L541.2 231.2L538.8 231.2L538.2 231.8L535.2 231.8L531.8 233.8L529.2 236.2L527.2 239.2L520.8 241.2L514.2 245.8L512.2 245.8L508.2 247.8L504.2 248.2L501.2 249.8L499.2 251.8L495.2 253.8L493.8 253.8L490.2 255.2L485.2 260.8L483.8 261.2L480.8 263.8L477.8 264.8L474.8 267.8L469.8 268.8L469.2 269.2L467.2 269.2L452.8 273.2L456.2 274.2L457.8 275.2L459.2 275.2L462.8 276.8L472.2 278.8L482.2 282.2L483.2 282.2L484.8 280.8L486.8 282.2L488.2 282.2L489.2 283.2L490.8 289.2L492.8 291.8L502.8 295.2L509.2 300.2L512.8 301.8L514.2 303.2L514.2 304.2L515.2 305.2L515.8 307.2L518.2 309.8L525.2 313.2L531.2 318.8L539.2 323.8L546.2 325.2L554.8 330.2L563.2 332.2L564.8 333.2L566.2 333.2L567.8 334.2L575.2 336.8L582.8 338.2L588.8 340.8L594.2 340.8L601.2 337.8L604.2 335.2L607.2 335.2L607.8 334.8L612.2 334.2L614.8 332.8L616.8 330.8L619.2 330.2L623.8 327.8L629.2 325.8L636.8 324.2L641.2 321.2L648.8 321.2L651.2 320.2L655.8 319.8L659.8 317.8L660.8 314.8L665.8 310.2L668.2 309.2L671.8 305.8L672.8 303.8L674.8 302.2L676.8 299.8L677.8 297.2L686.2 293.2L687.8 288.8L689.8 287.8L692.2 285.2L695.2 278.2L697.8 274.8L698.8 271.2Z" fill="#f9fc06"/>
<path d="M697.8 269.2L697.2 268.8L696.8 263.8L694.2 259.8L690.8 257.8L686.2 256.8L683.8 251.8L681.2 249.2L678.2 247.8L677.2 247.8L673.2 244.2L665.8 241.8L662.8 238.2L659.8 236.2L647.2 232.8L636.2 227.8L632.8 226.8L630.8 224.2L628.2 222.8L624.8 221.8L619.8 221.2L615.2 218.2L612.8 218.2L610.2 217.2L604.8 216.8L601.8 214.2L595.2 211.2L591.8 210.8L591.2 210.2L580.8 209.8L580.2 210.2L575.2 210.8L571.8 212.2L569.8 212.2L566.8 213.2L562.2 218.2L555.8 219.8L552.2 221.8L550.2 225.2L546.8 227.8L543.2 231.8L540.2 232.8L534.8 233.2L532.2 234.8L527.8 240.2L523.8 241.8L522.2 241.8L519.2 243.2L515.8 246.8L512.8 246.8L507.8 249.2L504.8 249.2L501.8 250.8L499.8 252.8L495.8 254.8L492.8 255.2L490.8 256.2L487.8 259.2L486.2 261.8L485.2 261.8L482.2 264.2L477.8 266.2L475.2 268.8L456.2 273.2L463.8 275.8L472.8 277.8L481.2 280.8L482.8 280.8L483.2 281.2L484.8 279.8L487.8 281.8L489.2 281.8L490.2 283.8L491.2 288.8L493.2 291.2L503.2 294.2L510.2 299.2L514.8 301.2L517.2 307.2L519.2 309.2L525.2 312.2L532.8 318.8L538.8 322.2L547.2 324.2L553.2 328.2L556.8 329.8L558.2 329.8L560.8 330.8L563.2 330.8L564.8 331.8L570.2 333.2L573.2 334.8L584.2 337.2L588.2 339.2L591.8 339.8L592.2 339.2L594.8 339.2L596.2 338.2L599.8 337.2L603.8 334.2L611.8 333.2L614.2 331.8L616.2 329.8L617.2 329.8L624.2 326.2L635.8 323.2L639.2 321.2L640.8 319.8L643.8 319.8L644.2 319.2L644.8 319.8L650.8 319.8L651.2 319.2L657.2 318.2L659.2 316.8L659.8 314.2L661.2 312.8L662.8 312.2L665.2 309.8L667.8 308.8L670.2 306.2L671.8 303.2L675.2 300.2L677.2 296.2L678.2 296.2L682.2 294.2L683.8 294.2L686.2 292.2L687.2 288.8L691.2 285.8L692.8 282.8L693.8 278.2L695.2 276.8L696.8 273.8Z" fill="#f0ff0f"/>
<path d="M460.2 273.2L464.8 274.8L466.2 274.8L468.2 275.8L469.8 275.8L471.8 276.8L473.2 276.8L476.8 278.2L478.2 278.2L481.8 279.8L483.2 279.8L484.8 278.8L487.2 280.8L489.2 280.8L490.8 282.2L491.8 288.2L493.8 290.8L495.2 290.8L496.8 291.8L498.8 291.8L502.2 293.2L503.8 293.2L510.2 297.8L515.2 300.2L516.8 302.2L518.2 306.8L520.2 308.8L526.2 311.8L531.8 316.8L538.2 320.8L542.8 322.2L544.8 322.2L548.2 323.2L555.8 328.2L564.2 329.8L574.8 333.8L584.2 335.8L589.8 338.2L593.8 338.2L595.2 337.2L596.8 337.2L600.2 335.8L602.2 334.2L602.8 333.2L611.2 332.2L615.2 328.8L617.8 328.2L622.2 325.8L628.2 323.8L635.2 322.2L637.8 320.8L639.2 318.8L641.8 318.8L644.8 317.8L646.8 318.8L650.2 318.8L650.8 318.2L655.8 317.8L657.8 316.8L659.2 314.2L659.2 313.2L660.2 312.2L662.8 311.2L664.8 308.8L666.2 308.8L668.8 306.8L671.2 302.2L673.8 300.8L675.8 296.8L677.2 295.2L684.2 293.2L685.8 291.8L686.8 287.8L688.2 286.8L689.2 286.8L691.2 284.8L691.8 281.8L692.8 279.8L692.8 277.8L695.2 274.2L695.2 272.8L696.2 270.2L696.2 267.2L695.8 266.8L695.8 264.2L694.8 262.2L691.2 259.2L685.2 257.8L684.2 256.8L682.8 252.2L680.2 249.8L676.2 248.2L673.2 245.2L665.2 242.8L662.2 239.2L658.8 237.2L657.8 237.2L656.2 236.2L650.2 235.2L648.8 234.2L646.2 233.8L641.2 231.2L640.2 231.2L636.8 229.2L631.8 227.8L628.8 224.2L626.8 223.2L620.2 222.8L618.8 222.2L616.8 220.2L614.2 219.2L611.8 219.2L608.2 218.2L604.2 218.2L600.2 214.8L599.2 214.8L592.8 211.8L578.8 211.2L578.2 211.8L568.8 213.8L566.8 214.8L564.8 216.8L563.2 219.2L561.2 219.2L554.8 221.2L551.8 224.2L551.2 226.2L548.8 227.8L544.2 232.8L541.2 233.8L537.8 233.8L533.2 235.2L528.2 241.2L527.2 241.2L524.2 242.8L522.8 242.8L519.8 244.2L516.8 247.8L511.8 248.2L508.8 250.2L503.8 250.8L502.2 251.8L500.8 253.8L491.2 257.2L489.2 259.2L487.8 262.2L483.8 264.2L482.8 265.8L481.2 265.8L479.2 266.8L477.2 269.2Z" fill="#deff1f"/>
<path d="M463.8 273.2L468.2 274.2L470.2 275.2L471.8 275.2L475.2 276.8L476.8 276.8L480.2 278.2L481.8 278.2L482.2 278.8L485.2 278.2L486.8 279.8L490.8 280.2L491.8 283.2L492.2 288.2L494.2 290.2L495.8 290.2L497.8 291.2L500.2 291.2L501.8 292.2L503.8 292.2L510.8 296.8L515.2 298.8L517.8 300.8L517.8 302.8L518.8 304.2L518.8 305.2L521.8 308.8L525.2 310.2L531.8 315.8L539.8 320.2L543.2 321.2L545.2 321.2L545.8 321.8L547.8 321.8L556.2 327.2L558.2 327.2L560.2 328.2L563.8 328.2L565.2 329.2L567.2 329.2L574.2 332.2L585.2 334.8L587.8 336.2L592.2 337.2L592.8 336.8L597.8 335.8L601.2 333.8L602.2 332.2L603.8 331.8L609.8 331.8L611.8 330.8L614.2 327.8L617.2 327.2L621.8 324.8L624.8 324.2L628.2 322.8L633.8 321.8L635.8 320.8L638.8 317.2L645.8 316.8L647.2 317.8L650.8 317.8L651.2 317.2L656.2 316.8L657.8 315.8L659.2 311.8L662.8 310.2L664.2 308.2L666.8 307.8L668.2 306.2L670.2 302.8L670.2 301.8L673.8 299.2L675.2 296.8L675.2 295.8L676.2 294.8L678.8 294.2L680.2 293.2L682.8 293.2L684.8 292.2L686.2 287.2L689.8 285.8L690.8 284.2L691.2 280.8L691.8 280.2L691.8 277.8L693.8 275.2L695.2 268.8L694.8 268.2L694.8 264.8L693.2 261.8L690.8 260.2L684.2 258.8L683.2 257.8L682.8 254.8L680.2 250.8L675.8 249.2L674.8 247.8L672.2 245.8L664.8 243.8L661.2 239.8L658.2 238.2L656.8 238.2L653.2 236.8L649.2 236.2L640.8 232.2L639.8 232.2L635.2 229.8L633.8 229.8L632.2 228.8L631.2 228.8L629.2 225.8L626.8 224.2L619.8 223.8L618.2 223.2L616.2 221.2L613.8 220.2L603.8 219.2L599.8 215.8L598.8 215.8L592.8 212.8L587.2 212.8L586.8 212.2L580.2 212.2L579.8 212.8L575.2 213.2L574.8 213.8L567.8 215.2L565.2 217.8L563.8 220.2L561.2 220.2L554.8 222.2L552.8 224.8L552.8 226.2L549.2 228.8L546.2 231.8L544.8 234.2L542.2 234.2L541.8 234.8L538.8 234.8L538.2 235.2L534.2 235.8L532.2 237.2L529.8 241.8L520.8 244.8L518.8 246.8L517.8 248.8L512.2 249.2L509.2 251.2L505.2 251.2L503.2 252.2L501.2 254.8L499.8 254.8L496.8 256.8L492.2 257.8L489.8 260.2L488.8 263.2L486.2 263.8L484.2 265.2L483.2 266.8L481.8 266.8L479.8 267.8L478.2 269.8L471.2 271.2L465.2 273.2Z" fill="#ccff2e"/>
<path d="M693.8 265.2L692.8 262.8L691.8 261.8L689.2 261.2L687.8 260.2L683.2 259.8L682.2 258.2L680.8 252.8L679.2 251.2L676.8 250.2L675.2 250.2L673.8 247.8L671.2 246.2L664.2 244.8L661.8 241.2L658.8 239.8L654.2 238.2L648.8 237.2L640.2 233.2L639.2 233.2L634.8 230.8L633.8 230.8L632.2 229.8L630.8 229.8L629.2 228.8L628.8 226.8L626.8 225.2L618.8 224.8L615.8 222.2L613.2 221.2L602.8 220.2L599.2 216.8L598.2 216.8L592.2 213.8L584.2 213.8L583.8 213.2L583.2 213.8L578.2 213.8L577.8 214.2L575.8 214.2L575.2 214.8L568.2 216.2L565.8 218.8L565.8 219.8L564.2 221.2L561.2 221.2L560.8 221.8L555.8 222.8L553.8 225.2L553.8 227.2L549.8 229.8L547.2 232.2L546.2 235.2L542.8 235.2L542.2 235.8L539.2 235.8L538.8 236.2L534.2 236.8L532.2 238.8L530.2 242.8L521.8 245.2L519.8 247.2L518.2 249.8L512.2 250.2L509.8 252.2L505.2 252.2L504.2 252.8L501.8 255.8L498.8 256.2L497.2 257.8L494.8 257.8L492.2 258.8L490.8 260.8L490.8 262.2L489.8 264.2L486.8 264.8L483.8 267.8L481.2 268.2L479.8 270.2L474.8 271.2L468.8 273.2L467.2 273.2L470.2 273.8L482.2 277.8L484.2 277.2L485.8 277.8L487.2 279.2L491.2 279.8L492.2 281.8L492.8 288.2L493.8 289.2L504.8 291.8L511.2 295.8L517.8 298.8L518.8 300.2L518.8 302.2L519.8 303.8L519.8 304.8L521.8 307.8L526.8 310.2L532.2 315.2L537.8 317.8L538.8 318.8L541.8 319.2L543.8 320.2L548.2 320.8L556.2 326.2L558.8 326.2L560.8 327.2L564.2 327.2L576.8 331.8L584.2 333.2L589.8 335.8L593.8 335.8L595.8 334.8L598.8 334.2L602.8 330.8L609.8 330.8L610.8 330.2L613.8 326.8L616.8 326.2L621.2 323.8L622.8 323.8L624.8 322.8L626.2 322.8L628.2 321.8L632.2 321.2L633.8 320.2L634.8 320.2L637.8 316.2L641.2 316.2L641.8 315.8L645.2 315.8L645.8 315.2L647.8 316.8L652.2 316.8L652.8 316.2L655.2 316.2L657.2 314.8L657.8 312.2L658.8 310.8L660.2 310.8L662.2 309.8L664.2 307.2L666.2 307.2L667.8 305.8L669.2 303.2L669.2 301.2L670.8 300.2L671.8 300.2L673.2 298.8L675.2 293.8L677.8 293.8L679.2 292.8L683.8 292.2L685.2 289.8L685.2 287.2L686.2 286.2L688.8 285.8L690.2 284.2L690.8 277.2L692.8 275.2L692.8 273.8L693.2 273.2Z" fill="#b5ff47"/>
<path d="M470.8 273.2L473.8 273.8L477.2 275.2L478.8 275.2L482.2 276.8L486.2 276.8L487.8 278.8L491.8 278.8L492.8 279.8L493.2 287.8L494.2 288.8L495.8 288.8L497.2 289.8L501.2 289.8L502.8 290.8L504.8 290.8L509.8 293.8L510.8 293.8L511.8 294.8L518.2 297.8L519.8 299.8L520.2 303.2L521.2 305.8L522.8 307.2L527.2 309.8L532.2 314.2L534.8 315.8L535.8 315.8L540.8 318.2L542.8 318.2L544.2 319.2L548.8 319.8L556.8 325.2L567.8 326.8L569.2 327.8L571.8 328.2L576.2 330.2L585.8 332.2L590.2 334.8L593.2 334.8L594.8 333.8L596.8 333.8L599.2 332.8L601.2 329.8L609.8 329.8L611.2 328.8L611.8 326.8L613.2 325.8L616.2 325.2L622.8 322.2L633.2 319.8L635.2 318.2L636.8 314.8L644.2 314.8L644.8 314.2L646.2 314.2L648.2 315.8L654.8 315.8L655.8 315.2L656.8 313.8L657.8 310.2L659.2 310.2L660.8 309.2L661.8 309.2L663.2 306.8L665.8 306.8L667.2 305.2L668.8 301.8L668.8 300.2L672.2 298.8L674.8 293.2L683.2 291.8L684.2 290.8L684.8 287.2L686.2 285.8L688.8 285.2L689.8 284.2L690.2 278.8L688.8 277.2L691.8 275.2L692.8 266.2L691.2 262.8L686.8 261.2L682.8 260.8L681.2 259.2L680.8 255.2L679.2 252.2L676.8 251.2L674.8 251.2L671.8 247.2L663.2 245.2L661.8 242.8L658.8 240.8L656.8 240.8L655.2 239.8L649.2 238.8L646.8 237.2L645.2 237.2L639.8 234.2L638.8 234.2L634.2 231.8L629.2 230.2L626.8 226.2L625.2 225.8L617.8 225.8L616.8 225.2L614.8 222.8L612.2 222.8L609.8 221.8L603.8 221.8L603.2 221.2L601.8 221.2L598.8 217.8L597.8 217.8L593.2 215.2L591.2 215.2L590.8 214.8L578.8 214.8L578.2 215.2L574.2 215.8L572.2 216.8L569.8 216.8L567.8 217.8L566.2 221.2L564.8 222.2L560.8 222.2L558.8 223.2L555.8 223.8L554.8 225.8L554.8 227.8L553.2 229.2L550.2 230.8L548.2 232.8L547.2 236.2L543.2 236.2L540.8 237.2L535.8 237.2L533.8 238.2L532.2 241.8L530.2 243.8L525.8 245.2L524.2 245.2L522.2 246.2L520.8 247.8L520.2 249.8L519.2 250.8L512.8 251.2L510.2 253.2L505.8 253.2L503.2 255.2L502.8 256.8L500.2 256.8L497.8 258.8L493.2 259.2L491.8 261.2L491.2 264.8L490.8 265.2L487.2 265.8L485.2 268.2L485.8 268.8L485.2 269.2L482.2 269.2L479.8 271.2Z" fill="#9eff60"/>
<path d="M473.8 273.2L476.8 273.8L480.2 275.2L481.8 275.2L482.8 276.2L486.8 276.2L488.2 278.2L492.8 278.2L493.2 278.8L493.2 283.2L493.8 283.8L493.8 287.8L494.2 288.2L496.2 288.2L497.8 289.2L504.2 289.8L519.2 297.2L520.8 299.2L521.8 305.2L523.2 306.8L527.8 309.2L532.8 313.8L542.2 317.8L546.2 318.2L546.8 318.8L549.2 318.8L556.8 324.2L559.2 324.2L560.8 325.2L568.2 325.8L574.8 328.8L584.2 330.8L590.8 333.8L593.2 333.8L598.2 332.2L600.2 329.2L602.2 329.2L602.8 328.8L609.8 328.8L610.8 327.8L610.8 326.8L611.8 325.2L616.2 324.2L620.8 321.8L632.2 319.2L634.2 317.8L635.8 313.8L644.8 313.8L645.2 313.2L646.8 313.2L649.2 315.2L655.2 314.8L656.2 312.8L656.2 310.8L657.8 309.2L661.2 308.8L662.8 306.2L665.2 306.2L666.2 305.8L667.8 302.8L667.8 300.8L667.2 300.2L668.2 299.2L671.8 298.2L674.2 292.2L678.2 292.2L680.2 291.2L683.2 291.2L684.2 289.2L684.2 286.8L685.8 285.2L687.2 285.2L689.2 284.2L689.8 279.2L688.8 278.2L685.2 278.2L684.8 277.2L690.8 275.2L691.2 274.2L691.8 265.8L690.2 263.2L688.8 263.2L687.2 262.2L684.2 262.2L681.8 261.2L680.2 259.2L679.2 253.8L677.8 252.2L673.8 251.8L671.8 248.2L667.2 246.8L663.2 246.2L661.2 244.2L660.8 242.8L658.8 241.8L656.8 241.8L655.2 240.8L648.8 239.8L634.2 232.8L629.2 231.2L627.8 230.2L627.2 227.8L625.8 226.8L618.8 226.8L618.2 226.2L616.2 226.2L615.2 224.2L613.2 223.2L600.8 222.2L598.2 218.8L591.8 215.8L579.2 215.8L578.8 216.2L576.2 216.2L575.8 216.8L568.8 218.2L567.8 219.2L567.2 221.8L566.2 222.8L557.2 223.8L555.8 225.2L555.8 228.8L554.2 229.2L549.2 232.8L548.8 233.8L548.8 236.8L548.2 237.2L543.2 237.2L539.8 238.2L535.2 238.2L533.8 239.8L531.8 244.2L522.8 246.8L521.8 247.8L521.8 248.8L520.2 251.8L512.8 252.2L510.8 254.2L505.2 254.2L504.2 255.2L504.2 257.2L503.8 257.8L499.8 257.8L498.2 259.8L494.2 259.8L492.8 260.8L492.2 265.8L491.8 266.2L487.2 266.8L486.2 270.2L482.8 270.2L480.8 271.8Z" fill="#85ff7a"/>
<path d="M477.2 273.2L481.8 274.2L483.2 275.8L487.2 275.8L488.8 277.8L493.2 277.8L493.8 278.2L493.8 281.8L494.2 282.2L494.2 287.8L496.8 287.8L498.2 288.8L505.2 289.2L520.8 296.8L521.8 299.2L521.8 301.2L522.8 303.2L522.8 305.2L528.2 308.8L533.2 313.2L540.2 315.8L541.8 316.8L550.8 318.2L557.8 323.8L568.2 324.8L575.2 327.8L584.8 329.8L591.2 332.8L593.2 332.8L598.2 331.2L599.8 328.2L609.8 327.8L611.2 324.2L615.2 323.8L619.8 321.2L621.2 321.2L624.8 319.8L632.2 318.2L633.2 317.8L634.2 315.8L634.2 313.2L634.8 312.8L646.8 312.8L647.2 312.2L649.2 314.2L654.8 314.2L655.8 312.2L655.8 310.2L657.2 308.8L660.8 308.2L662.2 305.8L665.8 305.2L666.8 303.8L667.2 301.2L666.8 300.8L662.8 300.8L662.2 300.2L662.8 299.2L670.8 298.2L673.8 291.8L677.8 291.8L678.8 290.8L683.2 290.8L684.2 285.8L685.8 284.8L688.8 284.2L688.8 279.2L688.2 278.8L684.2 278.8L683.8 278.2L683.8 276.8L685.2 275.8L687.8 275.8L690.2 274.8L690.8 265.2L690.2 264.2L689.2 263.8L684.2 263.2L681.2 262.2L679.8 260.8L678.2 253.8L676.2 252.8L673.8 252.8L672.8 252.2L671.2 248.8L663.2 247.2L662.2 246.8L660.2 243.8L658.8 242.8L655.2 241.8L653.2 241.8L652.8 241.2L648.2 240.8L633.2 233.2L627.8 231.8L625.8 227.8L615.8 227.2L614.8 225.2L613.2 224.2L599.8 223.2L598.8 220.8L597.2 219.2L592.2 216.8L579.2 216.8L578.8 217.2L571.2 218.2L568.8 219.2L567.2 223.2L564.2 224.2L557.2 224.8L556.8 225.2L556.2 229.2L551.2 232.2L549.8 233.8L549.8 237.8L549.2 238.2L543.2 238.2L542.8 238.8L535.2 239.2L534.2 240.8L534.2 241.8L533.2 242.8L533.2 243.8L531.8 245.2L522.8 247.8L521.2 252.8L513.8 252.8L512.8 253.2L511.8 254.8L505.2 255.2L504.2 258.2L499.8 258.8L499.8 259.8L498.2 260.8L494.2 260.8L493.2 263.2L493.2 266.8L492.8 267.2L488.2 267.2L487.2 268.8L487.8 269.8L487.2 271.2L482.8 271.2L481.8 272.2Z" fill="#6cff93"/>
<path d="M480.2 273.2L482.2 273.8L483.2 275.2L487.8 275.2L488.8 277.2L493.8 277.2L494.2 277.8L494.2 281.8L494.8 282.2L494.8 287.2L497.2 287.2L498.8 288.2L505.8 288.8L509.2 290.2L510.2 291.2L513.8 292.2L521.8 296.2L522.8 299.2L523.2 304.8L528.8 308.2L533.8 312.8L541.2 315.8L543.8 315.8L544.2 316.2L550.8 317.2L557.2 322.8L568.8 323.8L575.8 326.8L585.2 328.8L591.2 331.8L593.2 331.8L593.8 331.2L597.8 330.8L598.2 328.2L599.2 327.2L609.2 327.2L609.8 324.2L611.2 323.2L615.2 322.8L620.2 320.2L631.8 317.8L632.8 317.2L633.2 313.2L634.2 311.8L647.8 311.8L649.8 313.8L654.2 313.8L655.2 311.8L655.2 309.8L656.8 308.2L660.8 307.8L661.8 305.2L664.2 305.2L666.2 303.8L666.8 301.8L666.2 301.2L662.2 301.2L661.8 300.8L661.8 299.2L662.2 298.8L670.2 297.8L673.2 291.2L677.8 291.2L678.8 290.2L682.8 290.2L683.8 285.2L685.2 284.2L688.2 283.8L688.2 279.8L687.8 279.2L683.8 279.2L683.2 278.8L683.2 276.2L684.8 275.2L687.2 275.2L689.8 274.2L689.8 264.8L682.2 263.8L679.2 261.8L678.2 259.2L677.8 254.2L675.8 253.2L673.2 253.2L672.2 252.8L670.8 249.2L662.8 247.8L661.8 247.2L659.8 244.2L658.2 243.2L655.8 243.2L655.2 242.8L648.2 241.8L633.2 234.2L628.2 232.8L626.2 231.2L625.2 228.2L615.2 228.2L613.8 225.2L599.2 224.2L598.2 223.2L598.2 221.8L597.2 220.2L592.2 217.8L579.2 217.8L578.8 218.2L576.2 218.2L575.8 218.8L569.2 219.8L568.8 222.8L567.8 224.2L557.8 225.2L557.2 225.8L557.2 229.8L550.8 233.8L550.8 238.8L550.2 239.2L535.8 239.8L534.8 241.2L534.8 242.2L533.8 243.2L533.8 244.2L532.2 245.8L523.2 248.2L522.8 252.2L521.8 253.8L513.2 253.8L513.2 255.2L512.8 255.8L505.8 255.8L505.8 258.8L505.2 259.2L500.2 259.2L500.2 260.8L499.8 261.2L494.8 261.2L494.2 261.8L494.2 267.8L493.8 268.2L488.2 268.2L488.2 271.2L487.8 271.8L483.2 271.8L481.8 273.2Z" fill="#42f9bd"/>
</g>
<polygon points="483.0,272.4 483.0,271.8 488.5,271.8 488.5,268.7 494.6,268.7 494.6,261.5 500.3,261.5 500.3,259.5 506.0,259.5 506.0,256.2 513.3,255.8 513.3,254.0 522.5,254.0 523.4,248.5 533.5,245.7 535.3,240.2 551.0,239.3 551.0,233.8 557.4,230.1 557.4,225.5 568.4,224.6 569.3,220.0 580.3,218.2 591.3,218.2 596.8,220.9 597.8,224.6 612.9,225.5 614.7,228.3 624.8,228.3 625.7,232.0 632.1,234.7 642.2,239.3 647.8,242.0 658.8,243.9 660.6,247.6 670.7,249.4 671.6,253.1 677.1,254.0 678.0,261.3 681.7,264.1 689.1,265.0 689.0,274.2 682.7,275.1 682.7,279.7 688.2,279.7 688.2,283.4 683.6,284.3 682.7,289.8 672.6,290.7 669.8,297.1 661.5,298.0 660.6,301.7 666.1,301.7 665.2,304.5 660.6,304.5 660.6,307.2 655.0,308.2 654.2,312.8 649.6,312.8 648.7,310.9 633.0,310.9 632.1,316.4 618.4,320.1 613.8,322.0 609.2,322.9 608.3,326.5 597.8,326.5 596.8,330.2 591.3,331.1 586.7,328.4 574.8,325.6 568.4,322.9 557.4,322.0 551.0,316.4 540.0,314.6 533.5,311.8 528.9,308.2 523.4,304.5 522.5,296.2 513.3,291.6 505.0,288.0 494.6,286.8 494.6,276.5 488.5,276.5 488.5,274.4 483.0,274.4" fill="#00008c"/>
</g>
<path d="M419.4 102V428M455.4 102V428M491.7 102V428M528.4 102V428M565.0 102V428M602.1 102V428M638.2 102V428M674.4 102V428M711.3 102V428M747.4 102V428M415 419.5H780M415 393.5H780M415 367.4H780M415 342.3H780M415 316.3H780M415 291.2H780M415 265.4H780M415 238.9H780M415 214.0H780M415 187.8H780M415 162.9H780M415 136.4H780M415 111.5H780" stroke="#d6d6d6" stroke-opacity="0.85" stroke-width="1" stroke-dasharray="3 1" fill="none"/>
<path d="M594 270.7h6.2l-1.9 3.75 1.9 3.75h-6.2l1.9-3.75z" fill="#fff"/>
<path d="M414.5 102V428.5H780" stroke="#000" stroke-width="1" fill="none" shape-rendering="crispEdges"/>
<path d="M410 419.5H414M410 393.5H414M410 367.5H414M410 342.5H414M410 316.5H414M410 291.5H414M410 265.5H414M410 238.5H414M410 214.5H414M410 187.5H414M410 162.5H414M410 136.5H414M410 111.5H414M419.5 428V431M455.5 428V431M491.5 428V431M528.5 428V431M565.5 428V431M602.5 428V431M638.5 428V431M674.5 428V431M711.5 428V431M747.5 428V431" stroke="#000" stroke-width="1" fill="none" shape-rendering="crispEdges"/>
<g font-family="'Liberation Sans',sans-serif" font-size="10.2" fill="#000">
<text transform="translate(407.5,423.2) scale(0.914,1)" text-anchor="end">-60.00</text>
<text transform="translate(407.5,397.2) scale(0.914,1)" text-anchor="end">-50.00</text>
<text transform="translate(407.5,371.1) scale(0.914,1)" text-anchor="end">-40.00</text>
<text transform="translate(407.5,346.0) scale(0.914,1)" text-anchor="end">-30.00</text>
<text transform="translate(407.5,320.0) scale(0.914,1)" text-anchor="end">-20.00</text>
<text transform="translate(407.5,294.9) scale(0.914,1)" text-anchor="end">-10.00</text>
<text transform="translate(407.5,269.1) scale(0.914,1)" text-anchor="end">0.00</text>
<text transform="translate(407.5,242.6) scale(0.914,1)" text-anchor="end">10.00</text>
<text transform="translate(407.5,217.7) scale(0.914,1)" text-anchor="end">20.00</text>
<text transform="translate(407.5,191.5) scale(0.914,1)" text-anchor="end">30.00</text>
<text transform="translate(407.5,166.6) scale(0.914,1)" text-anchor="end">40.00</text>
<text transform="translate(407.5,140.1) scale(0.914,1)" text-anchor="end">50.00</text>
<text transform="translate(407.5,115.2) scale(0.914,1)" text-anchor="end">60.00</text>
<text transform="translate(418.7,443.2) scale(0.914,1)" text-anchor="middle">52.80</text>
<text transform="translate(454.7,443.2) scale(0.914,1)" text-anchor="middle">59.20</text>
<text transform="translate(491.0,443.2) scale(0.914,1)" text-anchor="middle">65.60</text>
<text transform="translate(527.7,443.2) scale(0.914,1)" text-anchor="middle">72.00</text>
<text transform="translate(564.3,443.2) scale(0.914,1)" text-anchor="middle">78.40</text>
<text transform="translate(601.4,443.2) scale(0.914,1)" text-anchor="middle">84.80</text>
<text transform="translate(637.5,443.2) scale(0.914,1)" text-anchor="middle">91.20</text>
<text transform="translate(673.7,443.2) scale(0.914,1)" text-anchor="middle">97.60</text>
<text transform="translate(710.6,443.2) scale(0.914,1)" text-anchor="middle">104.00</text>
<text transform="translate(746.7,443.2) scale(0.914,1)" text-anchor="middle">110.40</text>
</g>
<text x="597.5" y="462" text-anchor="middle" font-family="'Liberation Sans',sans-serif" font-size="12" fill="#000" textLength="68" lengthAdjust="spacingAndGlyphs">Time (Phase)</text>
<text transform="translate(369,265) rotate(-90)" text-anchor="middle" font-family="'Liberation Sans',sans-serif" font-size="11.3" fill="#000" textLength="90.5" lengthAdjust="spacingAndGlyphs">Amplitude (Level)</text>
<rect x="803" y="121" width="42" height="268.5" fill="url(#jet)"/>
<path d="M852 121.5H868" stroke="#e6e6e6" stroke-width="1" shape-rendering="crispEdges"/>
<g font-family="'Liberation Sans',sans-serif" font-size="10.2" fill="#000">
<text transform="translate(823.8,112.3) scale(0.914,1)" text-anchor="middle">Log10</text>
<text transform="translate(846.5,125.2) scale(0.914,1)" text-anchor="start">0</text>
<text transform="translate(846.5,180.1) scale(0.914,1)" text-anchor="start">-2</text>
<text transform="translate(846.5,233.3) scale(0.914,1)" text-anchor="start">-5</text>
<text transform="translate(846.5,286.5) scale(0.914,1)" text-anchor="start">-7</text>
<text transform="translate(846.5,339.7) scale(0.914,1)" text-anchor="start">-10</text>
<text transform="translate(846.5,393.7) scale(0.914,1)" text-anchor="start">-12</text>
</g>
<path d="M224 120.5H337M224 146.5H337M224 171.5H337M224 197.5H337M224 223.5H337M224 248.5H337M224 274.5H337M224 300.5H337M224 325.5H337M224 351.5H337M224 377.5H337M224 402.5H337M298.5 102V428M224 428.5H337" stroke="#444" stroke-width="1" stroke-dasharray="2.5 1.5" fill="none" shape-rendering="crispEdges"/>
<path d="M223.5 102V429" stroke="#000" stroke-width="1" fill="none" shape-rendering="crispEdges"/>
<g font-family="'Liberation Sans',sans-serif" font-size="10.2" fill="#000">
<text transform="translate(219.0,123.8) scale(0.914,1)" text-anchor="end">56.50</text>
<text transform="translate(219.0,149.4) scale(0.914,1)" text-anchor="end">46.50</text>
<text transform="translate(219.0,175.1) scale(0.914,1)" text-anchor="end">36.50</text>
<text transform="translate(219.0,200.8) scale(0.914,1)" text-anchor="end">26.50</text>
<text transform="translate(219.0,226.4) scale(0.914,1)" text-anchor="end">16.50</text>
<text transform="translate(219.0,252.1) scale(0.914,1)" text-anchor="end">6.50</text>
<text transform="translate(219.0,277.8) scale(0.914,1)" text-anchor="end">-3.50</text>
<text transform="translate(219.0,303.4) scale(0.914,1)" text-anchor="end">-13.50</text>
<text transform="translate(219.0,329.1) scale(0.914,1)" text-anchor="end">-23.50</text>
<text transform="translate(219.0,354.8) scale(0.914,1)" text-anchor="end">-33.50</text>
<text transform="translate(219.0,380.5) scale(0.914,1)" text-anchor="end">-43.50</text>
<text transform="translate(219.0,406.1) scale(0.914,1)" text-anchor="end">-53.50</text>
<text transform="translate(219.0,431.8) scale(0.914,1)" text-anchor="end">-63.50</text>
<text transform="translate(222.7,443.7) scale(0.914,1)" text-anchor="middle">-15.00</text>
<text transform="translate(299.1,443.7) scale(0.914,1)" text-anchor="middle">-5.00</text>
</g>
<text x="279.7" y="460" text-anchor="middle" font-family="'Liberation Sans',sans-serif" font-size="8" fill="#000">Log10(BER)</text>
<polyline points="246.2,220.4 288.8,220.3 294.6,218.7 299.5,216.9 302.4,214.4 304.3,210.9 309.2,208.6 312.1,204.7 317.0,198.9 321.4,192.7 331.5,192.1 335.8,190.5 336.6,188.2 336.6,102.0" fill="none" stroke="#1c1c9c" stroke-width="1.6" stroke-linejoin="round"/>
<polyline points="246.5,330.4 290.2,330.6 295.8,332.0 298.5,335.4 304.0,341.0 311.0,346.0 315.2,352.0 320.2,358.4 333.2,359.5 336.5,361.7 336.5,428.0" fill="none" stroke="#1c1c9c" stroke-width="1.6" stroke-linejoin="round"/>
<path d="M415 492.5H780M415 511.0H780M415 530.5H780M415 549.5H780M418.5 472V569M491.5 472V569M565.5 472V569M638.5 472V569M711.5 472V569" stroke="#444" stroke-width="1" stroke-dasharray="2.5 1.5" fill="none" shape-rendering="crispEdges"/>
<path d="M414 569.5H780" stroke="#000" stroke-width="1.4" fill="none" shape-rendering="crispEdges"/>
<g font-family="'Liberation Sans',sans-serif" font-size="10.2" fill="#000">
<text transform="translate(408.2,496.3) scale(0.914,1)" text-anchor="end">-3.48</text>
<text transform="translate(408.2,514.8) scale(0.914,1)" text-anchor="end">-6.36</text>
<text transform="translate(408.2,534.3) scale(0.914,1)" text-anchor="end">-9.24</text>
<text transform="translate(408.2,553.3) scale(0.914,1)" text-anchor="end">-12.12</text>
<text transform="translate(408.2,572.8) scale(0.914,1)" text-anchor="end">-15.00</text>
<text transform="translate(418.5,582.2) scale(0.914,1)" text-anchor="middle">52.69</text>
<text transform="translate(491.8,582.2) scale(0.914,1)" text-anchor="middle">65.49</text>
<text transform="translate(565.2,582.2) scale(0.914,1)" text-anchor="middle">78.29</text>
<text transform="translate(638.4,582.2) scale(0.914,1)" text-anchor="middle">91.09</text>
<text transform="translate(711.3,582.2) scale(0.914,1)" text-anchor="middle">103.89</text>
</g>
<text transform="translate(368.5,520) rotate(-90)" text-anchor="middle" font-family="'Liberation Sans',sans-serif" font-size="10.2" fill="#000" textLength="53.5" lengthAdjust="spacingAndGlyphs">Log10(BER)</text>
<polyline points="414.7,485.4 426.6,488.8 437.1,491.2 447.7,496.5 455.6,496.7 466.2,501.2 472.8,502.5 479.4,506.5 482.6,510.5 483.1,549.5" fill="none" stroke="#1c1c9c" stroke-width="1.6" stroke-linejoin="round"/>
<polyline points="687.5,549.6 688.0,524.5 689.6,519.2 693.6,516.0 694.1,508.7 696.2,504.2 699.4,502.0 702.0,496.0 710.2,488.3 720.5,480.9 731.0,476.2 744.3,473.8 760.0,472.7 780.0,472.2" fill="none" stroke="#1c1c9c" stroke-width="1.6" stroke-linejoin="round"/>
</svg>
<span class="t" style="left:3.50px;top:574.80px;font-family:'Liberation Sans',sans-serif;font-size:13px;font-weight:bold;font-style:normal;color:#00007a;transform:scaleX(0.9416);transform-origin:0 0;">BER Target 10^-</span>
<div class="combo" style="left:100px;top:571px;width:62px;height:22px"><i></i></div>
<span class="t" style="left:104.50px;top:576.59px;font-family:'Liberation Sans',sans-serif;font-size:12.3px;font-weight:normal;font-style:normal;color:#111;transform:scaleX(0.8475);transform-origin:0 0;">7</span>
<div class="radio" style="left:165.9px;top:602.9px"></div>
<span class="t" style="left:186.20px;top:602.50px;font-family:'Liberation Sans',sans-serif;font-size:13px;font-weight:bold;font-style:normal;color:#00007a;transform:scaleX(0.9231);transform-origin:0 0;">Data Cursor</span>
<div class="radio on" style="left:265.1px;top:602.9px"></div>
<span class="t" style="left:285.00px;top:602.50px;font-family:'Liberation Sans',sans-serif;font-size:13px;font-weight:bold;font-style:normal;color:#00007a;transform:scaleX(0.9259);transform-origin:0 0;">Zoom In</span>
<div class="btn" style="left:365px;top:597px;width:95px;height:23px;"></div><span class="t" style="left:382.80px;top:602.60px;font-family:'Liberation Sans',sans-serif;font-size:13px;font-weight:bold;font-style:normal;color:#00007a;transform:scaleX(0.9089);transform-origin:50% 0;">Zoom Out</span>
<span class="t" style="left:621.40px;top:603.00px;font-family:'Liberation Sans',sans-serif;font-size:13px;font-weight:bold;font-style:normal;color:#00007a;transform:scaleX(0.8768);transform-origin:0 0;">Colormap</span>
<div class="combo" style="left:683px;top:596px;width:100.5px;height:22.5px"><i></i></div>
<span class="t" style="left:688.00px;top:602.69px;font-family:'Liberation Sans',sans-serif;font-size:12.3px;font-weight:normal;font-style:normal;color:#111;transform:scaleX(0.8879);transform-origin:0 0;">Default</span>
<div class="check" style="left:789.2px;top:601.9px"></div>
<span class="t" style="left:808.90px;top:603.00px;font-family:'Liberation Sans',sans-serif;font-size:13px;font-weight:bold;font-style:normal;color:#00007a;transform:scaleX(0.9300);transform-origin:0 0;">Legend</span>
<div class="btn" style="left:0px;top:625px;width:163.6px;height:17px;border-left:none;border-radius:0 3px 3px 0"></div><span class="t" style="left:34.87px;top:629.20px;font-family:'Liberation Sans',sans-serif;font-size:13px;font-weight:bold;font-style:normal;color:#00007a;transform:scaleX(0.9582);transform-origin:50% 0;">Save Selected</span>
<div class="btn" style="left:0px;top:647px;width:163.6px;height:17px;border-left:none;border-radius:0 3px 3px 0"></div><span class="t" style="left:38.75px;top:651.00px;font-family:'Liberation Sans',sans-serif;font-size:13px;font-weight:bold;font-style:normal;color:#00007a;transform:scaleX(0.9509);transform-origin:50% 0;">Save All Plots</span>
<div class="status" style="top:624px;height:20px"></div>
<div class="status" style="top:645px;height:22px"></div>
<div class="status" style="top:668px;height:20px"></div>
<div class="abs" style="left:166px;top:644.1px;width:703px;height:1.5px;background:#7c7870"></div>
<div class="abs" style="left:166px;top:666.4px;width:703px;height:1.5px;background:#7c7870"></div>
<span class="t" style="left:151.44px;top:626.70px;font-family:'Liberation Sans',sans-serif;font-size:13px;font-weight:normal;font-style:normal;color:#fff;transform:scaleX(0.8421);transform-origin:50% 0;">Data Rate=24.576GBd, Eye Width=0.577UI(23.484ps), Eye Height= 61(  33.85%), Jitter(p-p)=0.423UI(17.206ps) at BER&lt;10^-7</span>
<div class="btn" style="left:1px;top:693px;width:159px;height:22px;"></div><span class="t" style="left:15.05px;top:699.00px;font-family:'Liberation Sans',sans-serif;font-size:13px;font-weight:bold;font-style:normal;color:#00007a;transform:scaleX(0.9375);transform-origin:50% 0;">Load Simulation Data</span>
<div class="btn" style="left:170px;top:693px;width:79px;height:22px;"></div><span class="t" style="left:183.76px;top:699.00px;font-family:'Liberation Sans',sans-serif;font-size:13px;font-weight:bold;font-style:normal;color:#00007a;transform:scaleX(0.9629);transform-origin:50% 0;">CSV Eye</span>
<div class="btn" style="left:259px;top:693px;width:79px;height:22px;"></div><span class="t" style="left:276.75px;top:699.00px;font-family:'Liberation Sans',sans-serif;font-size:13px;font-weight:bold;font-style:normal;color:#00007a;transform:scaleX(0.9451);transform-origin:50% 0;">Re-Plot</span>
<div class="btn" style="left:525px;top:693px;width:79px;height:22px;"></div><span class="t" style="left:549.97px;top:699.00px;font-family:'Liberation Sans',sans-serif;font-size:13px;font-weight:bold;font-style:normal;color:#00007a;transform:scaleX(0.9175);transform-origin:50% 0;">Load</span>
<div class="btn" style="left:614px;top:693px;width:78px;height:22px;"></div><span class="t" style="left:638.81px;top:699.00px;font-family:'Liberation Sans',sans-serif;font-size:13px;font-weight:bold;font-style:normal;color:#00007a;transform:scaleX(0.9811);transform-origin:50% 0;">Save</span>
<div class="btn" style="left:703px;top:693px;width:78px;height:22px;"></div><span class="t" style="left:718.78px;top:699.00px;font-family:'Liberation Sans',sans-serif;font-size:13px;font-weight:bold;font-style:normal;color:#00007a;transform:scaleX(0.9848);transform-origin:50% 0;">Save as</span>
<div class="btn" style="left:792px;top:693px;width:78px;height:22px;"></div><span class="t" style="left:807.45px;top:699.00px;font-family:'Liberation Sans',sans-serif;font-size:13px;font-weight:bold;font-style:normal;color:#00007a;transform:scaleX(0.8919);transform-origin:50% 0;">Options</span>
<div class="abs" style="left:0;top:720px;width:871px;height:1px;background:#dcdcdc"></div>
</body></html>
